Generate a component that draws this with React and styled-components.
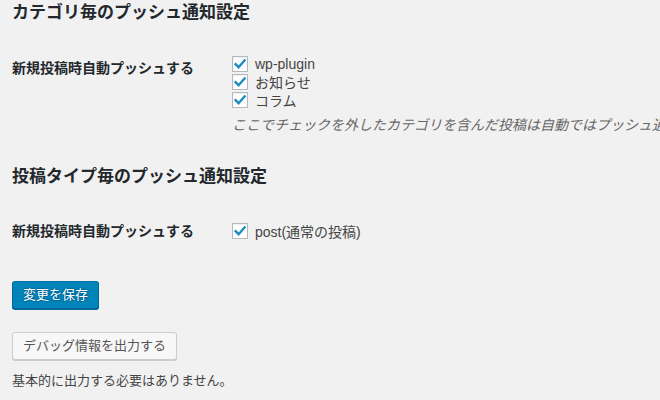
import React from "react";
import styled, { createGlobalStyle } from "styled-components";

const Global = createGlobalStyle`
  html, body { margin: 0; padding: 0; background: #f1f1f1; overflow: hidden; }
  body {
    font-family: "Liberation Sans", "Noto Sans CJK JP", sans-serif;
    color: #444;
    font-size: 13px;
  }
`;

const Page = styled.div`
  width: 660px;
  height: 400px;
  padding: 2px 0 0 12px;
  box-sizing: border-box;
`;

const Heading = styled.h2`
  margin: ${(p) => p.$mt || 0}px 0 0;
  font-size: 17px;
  line-height: 22px;
  font-weight: 700;
  color: #23282d;
  white-space: nowrap;
`;

const Row = styled.div`
  display: grid;
  grid-template-columns: 220px 1fr;
  margin-top: ${(p) => p.$mt}px;
`;

const Label = styled.div`
  padding-top: ${(p) => p.$pt}px;
  font-size: 14px;
  line-height: 18px;
  font-weight: 700;
  color: #23282d;
  white-space: nowrap;
`;

const Options = styled.div`
  display: flex;
  flex-direction: column;
  padding-top: ${(p) => p.$pt}px;
`;

const Option = styled.label`
  display: flex;
  align-items: center;
  gap: 7px;
  height: 18px;
  font-size: 14px;
  color: #444;
  white-space: nowrap;
`;

const Box = styled.span`
  width: 14px;
  height: 14px;
  border: 1px solid #b4b9be;
  background: #fff;
  box-shadow: inset 0 1px 2px rgba(0, 0, 0, 0.07);
  display: flex;
  align-items: center;
  justify-content: center;
  flex: none;
`;

const Description = styled.p`
  margin: 7px 0 0;
  font-size: 14px;
  line-height: 18px;
  font-style: italic;
  color: #666;
  white-space: nowrap;
`;

const Button = styled.button`
  display: block;
  height: 28px;
  padding: 0 10px 1px;
  margin-top: ${(p) => p.$mt}px;
  font-family: inherit;
  font-size: 13px;
  line-height: 26px;
  border-radius: 3px;
  border: 1px solid;
  cursor: pointer;
  white-space: nowrap;
  background: ${(p) => (p.$primary ? "#0085ba" : "#f7f7f7")};
  border-color: ${(p) => (p.$primary ? "#0073aa #006799 #006799" : "#ccc")};
  color: ${(p) => (p.$primary ? "#fff" : "#555")};
  box-shadow: ${(p) => (p.$primary ? "0 1px 0 #006799" : "0 1px 0 #ccc")};
  text-shadow: ${(p) =>
    p.$primary ? "0 -1px 1px #006799, 1px 0 1px #006799, 0 1px 1px #006799, -1px 0 1px #006799" : "none"};
`;

const Note = styled.p`
  margin: 12px 0 0;
  font-size: 13px;
  line-height: 18px;
  color: #444;
`;

const Check = () => (
  <Box>
    <svg width="14" height="14" viewBox="0 0 14 14">
      <path d="M2.6 7.2 L5.6 10.2 L11.6 3.4" fill="none" stroke="#1e8cbe" strokeWidth="2.4" strokeLinecap="square" strokeLinejoin="miter" />
    </svg>
  </Box>
);

const CheckOption = ({ children }) => (
  <Option>
    <Check />
    {children}
  </Option>
);

export default function App() {
  return (
    <Page>
      <Global />
      <Heading>カテゴリ毎のプッシュ通知設定</Heading>
      <Row $mt={15}>
        <Label $pt={20}>新規投稿時自動プッシュする</Label>
        <Options $pt={16}>
          <CheckOption>wp-plugin</CheckOption>
          <CheckOption>お知らせ</CheckOption>
          <CheckOption>コラム</CheckOption>
          <Description>
            ここでチェックを外したカテゴリを含んだ投稿は自動ではプッシュ通知されません。
          </Description>
        </Options>
      </Row>
      <Heading $mt={32}>投稿タイプ毎のプッシュ通知設定</Heading>
      <Row $mt={14}>
        <Label $pt={20}>新規投稿時自動プッシュする</Label>
        <Options $pt={20}>
          <CheckOption>post(通常の投稿)</CheckOption>
        </Options>
      </Row>
      <Button $primary $mt={41}>変更を保存</Button>
      <Button $mt={23}>デバッグ情報を出力する</Button>
      <Note>基本的に出力する必要はありません。</Note>
    </Page>
  );
}
